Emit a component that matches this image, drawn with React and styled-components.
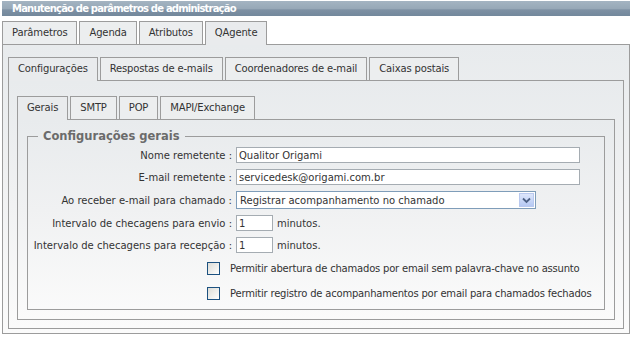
import React from "react"
import styled, { createGlobalStyle } from "styled-components"

const GlobalStyle = createGlobalStyle`
    body{
        margin:0;
        background:#ffffff;
        font-family:"DejaVu Sans", Verdana, sans-serif;
        font-size:10px;
        color:#333333;
    }
`

export default function App() {
    return (
        <Page>
            <GlobalStyle />
            <TitleBar>Manutenção de parâmetros de administração</TitleBar>

            <TabRow $first>
                <Tab>Parâmetros</Tab>
                <Tab>Agenda</Tab>
                <Tab>Atributos</Tab>
                <Tab $active>QAgente</Tab>
            </TabRow>
            <Panel $pad="12px 5px 4px 5px" $outer>
                <TabRow>
                    <Tab $active>Configurações</Tab>
                    <Tab>Respostas de e-mails</Tab>
                    <Tab>Coordenadores de e-mail</Tab>
                    <Tab>Caixas postais</Tab>
                </TabRow>
                <Panel $pad="15px 8px 8px 8px">
                    <TabRow>
                        <Tab $active>Gerais</Tab>
                        <Tab>SMTP</Tab>
                        <Tab>POP</Tab>
                        <Tab>MAPI/Exchange</Tab>
                    </TabRow>
                    <Panel $pad="9px 9px 9px 9px">
                        <Fieldset>
                            <Legend>Configurações gerais</Legend>
                            <Form>
                                <Label>Nome remetente :</Label>
                                <TextInput $w="344px" defaultValue="Qualitor Origami" />

                                <Label>E-mail remetente :</Label>
                                <TextInput $w="344px" defaultValue="servicedesk@origami.com.br" />

                                <Label>Ao receber e-mail para chamado :</Label>
                                <SelectBox>
                                    <SelectText>Registrar acompanhamento no chamado</SelectText>
                                    <ArrowButton>
                                        <svg width="9" height="7" viewBox="0 0 9 7">
                                            <path d="M1 1.5 L4.5 5 L8 1.5" fill="none" stroke="#4d6185" strokeWidth="1.8" />
                                        </svg>
                                    </ArrowButton>
                                </SelectBox>

                                <Label>Intervalo de checagens para envio :</Label>
                                <Inline>
                                    <TextInput $w="37px" defaultValue="1" />
                                    <span>minutos.</span>
                                </Inline>

                                <Label>Intervalo de checagens para recepção :</Label>
                                <Inline>
                                    <TextInput $w="37px" defaultValue="1" />
                                    <span>minutos.</span>
                                </Inline>
                            </Form>

                            <Checks>
                                <CheckRow>
                                    <Check type="checkbox" />
                                    <span>Permitir abertura de chamados por email sem palavra-chave no assunto</span>
                                </CheckRow>
                                <CheckRow>
                                    <Check type="checkbox" />
                                    <span>Permitir registro de acompanhamentos por email para chamados fechados</span>
                                </CheckRow>
                            </Checks>
                        </Fieldset>
                    </Panel>
                </Panel>
            </Panel>
        </Page>
    )
}

const Page = styled.div`
    width:634px;
    height:339px;
    padding-top:1px;
    box-sizing:border-box;
`

const TitleBar = styled.div`
    margin:0 4px 5px 2px;
    height:15px;
    line-height:15px;
    padding-left:10px;
    color:#ffffff;
    font-weight:bold;
    font-size:10px;
    letter-spacing:-0.8px;
    background:linear-gradient(#a4b4c2 0%, #97a8b7 50%, #7d90a3 60%, #73889c 100%);
`

const TabRow = styled.div`
    display:flex;
    align-items:flex-start;
    gap:2px;
    height:24px;
    margin-bottom:-1px;
    margin-left:${props => props.$first ? "2px" : "0"};
    position:relative;
    z-index:1;
`

const Tab = styled.div`
    height:${props => props.$active ? "23px" : "22px"};
    line-height:22px;
    padding:0 9px;
    border:1px solid #9c9c9c;
    border-bottom:none;
    background:${props => props.$active ? "#e9ebed" : "#eceeef"};
    white-space:nowrap;
    letter-spacing:-0.15px;
    color:#333333;
`

const Panel = styled.div`
    border:1px solid #9c9c9c;
    padding:${props => props.$pad};
    background:linear-gradient(#e8ebed 0%, #f0f1f2 45%, #fbfbfb 100%);
    ${props => props.$outer ? "margin:0 4px 0 2px;" : ""}
`

const Fieldset = styled.fieldset`
    margin:0;
    border:1px solid #9c9c9c;
    padding:0 10px 6px 10px;
    min-width:0;
`

const Legend = styled.legend`
    padding:0 5px;
    font-weight:bold;
    font-size:11.5px;
    color:#6b6b6b;
`

const Form = styled.div`
    display:grid;
    grid-template-columns:201px 1fr;
    column-gap:4px;
    row-gap:6px;
    align-items:center;
    margin:4px 0 0 -7px;
`

const Label = styled.div`
    text-align:right;
    white-space:nowrap;
`

const TextInput = styled.input`
    box-sizing:border-box;
    width:${props => props.$w};
    height:16px;
    border:1px solid #a5acb2;
    background:#ffffff;
    padding:0 2px;
    margin:0;
    font-family:"DejaVu Sans", Verdana, sans-serif;
    font-size:10px;
    color:#333333;
    outline:none;
`

const SelectBox = styled.div`
    box-sizing:border-box;
    width:300px;
    height:18px;
    border:1px solid #7f9db9;
    background:#ffffff;
    display:flex;
    align-items:center;
    justify-content:space-between;
    padding:0 1px 0 3px;
`

const SelectText = styled.span`
    white-space:nowrap;
`

const ArrowButton = styled.span`
    width:15px;
    height:14px;
    box-sizing:border-box;
    border:1px solid #b9c9ef;
    background:linear-gradient(#dde6fb, #b6c9f3);
    display:flex;
    align-items:center;
    justify-content:center;
`

const Inline = styled.div`
    display:flex;
    align-items:center;
    gap:4px;
`

const Checks = styled.div`
    display:flex;
    flex-direction:column;
    gap:5px;
    margin-top:5px;
    padding-left:169px;
    letter-spacing:-0.2px;
`

const CheckRow = styled.div`
    display:flex;
    align-items:center;
    gap:10px;
    height:20px;
    white-space:nowrap;
`

const Check = styled.input`
    appearance:none;
    flex-shrink:0;
    margin:0;
    width:13px;
    height:13px;
    box-sizing:border-box;
    border:1px solid #1c5180;
    background:linear-gradient(135deg, #dcdcd7 0%, #f4f4f2 70%, #ffffff 100%);
`
